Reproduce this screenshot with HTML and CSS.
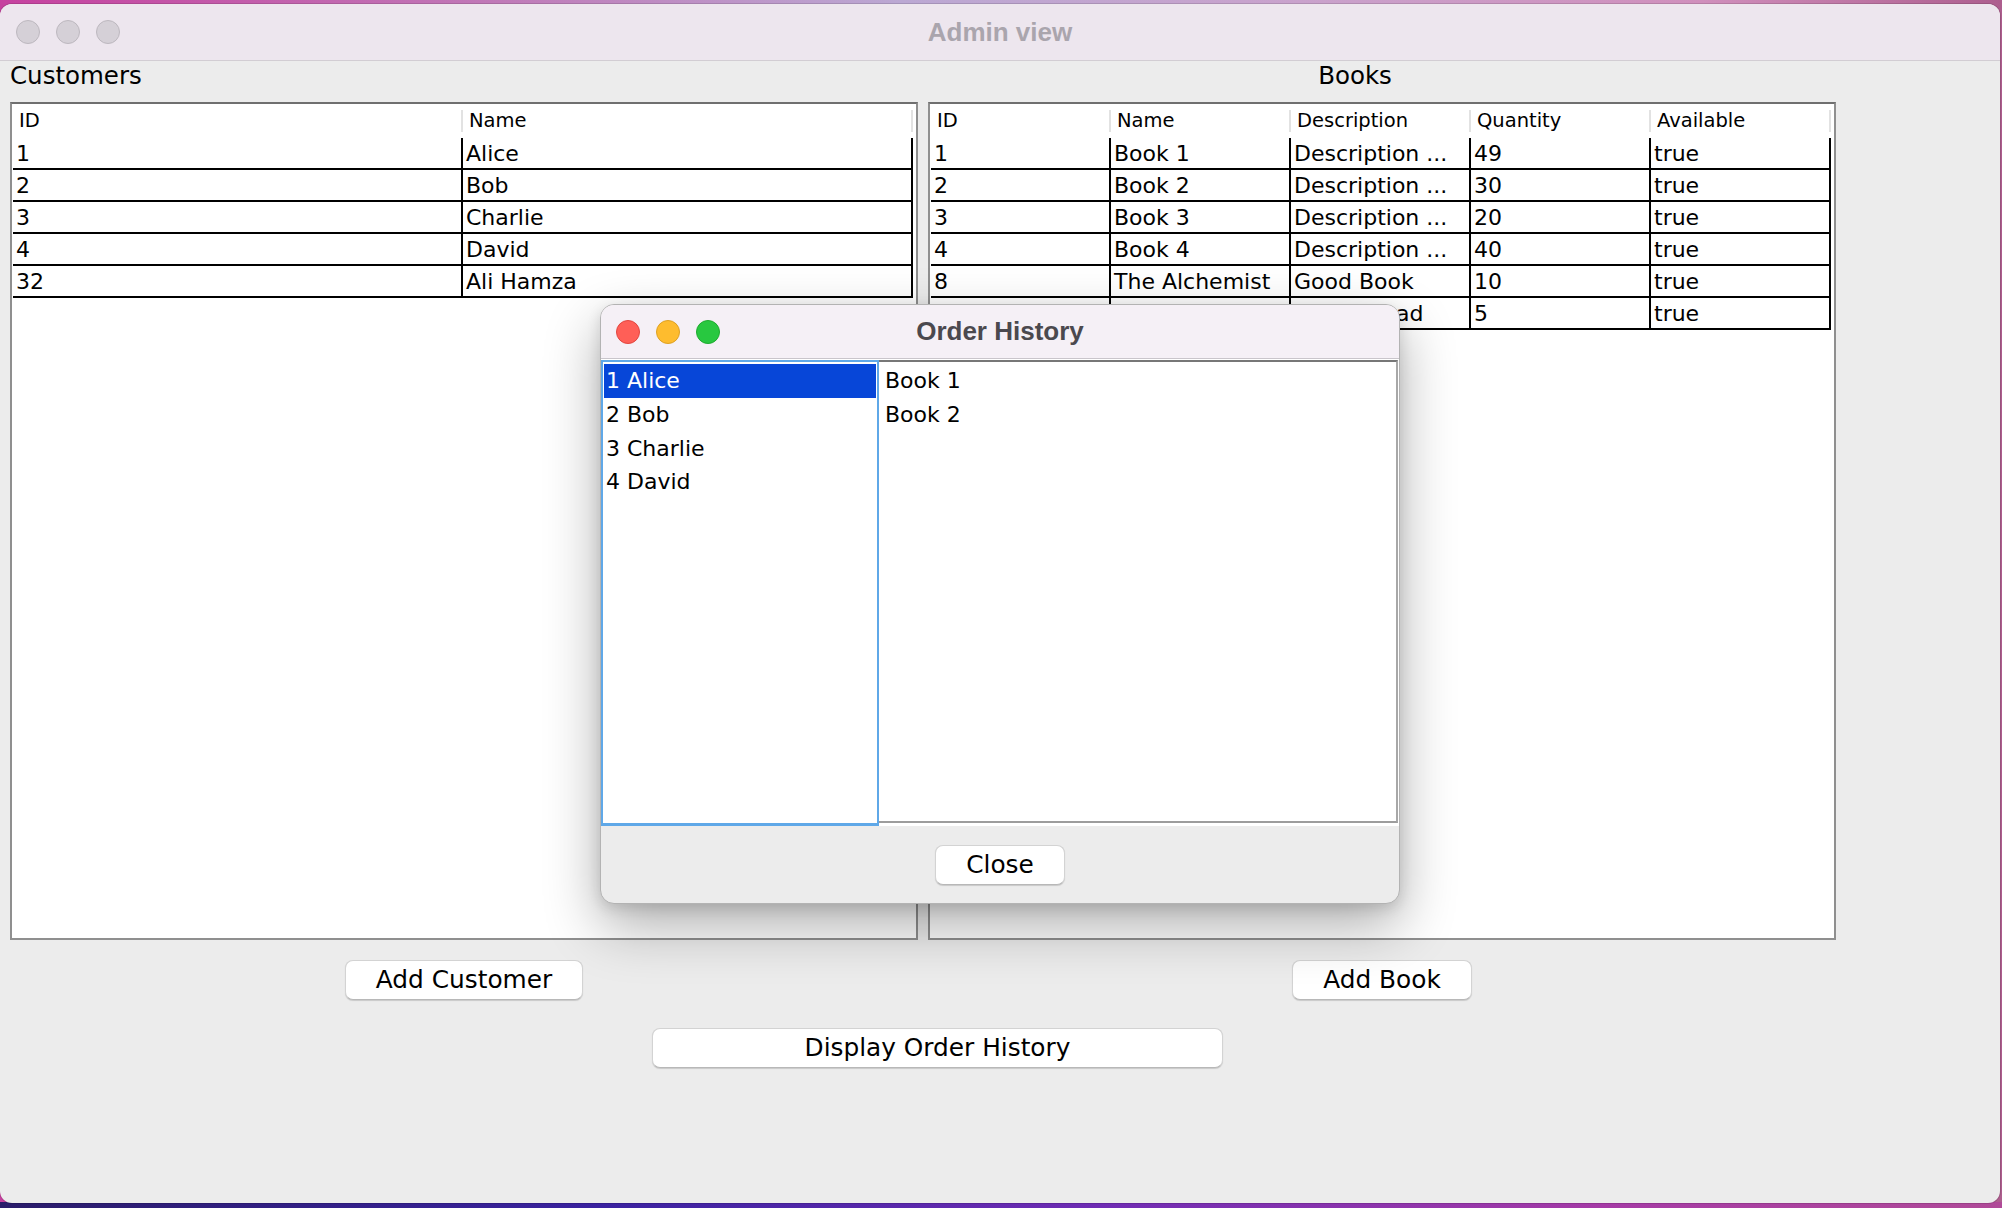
FILE: index.html
```html
<!DOCTYPE html>
<html lang="en">
<head>
<meta charset="utf-8">
<title>Admin view</title>
<link rel="stylesheet" href="styles.css">
</head>
<body>
<div class="window">
  <div class="titlebar">
    <div class="lights">
      <span class="light inactive"></span>
      <span class="light inactive"></span>
      <span class="light inactive"></span>
    </div>
    <div class="title">Admin view</div>
    <div></div>
  </div>

  <div class="content">
    <div class="panels">
      <section class="panel">
        <div class="label">Customers</div>
        <div class="tablebox">
          <div class="table cols-2">
            <div class="thead"><div class="th">ID</div><div class="th">Name</div></div>
            <div class="tr"><div class="td">1</div><div class="td">Alice</div></div>
            <div class="tr"><div class="td">2</div><div class="td">Bob</div></div>
            <div class="tr"><div class="td">3</div><div class="td">Charlie</div></div>
            <div class="tr"><div class="td">4</div><div class="td">David</div></div>
            <div class="tr"><div class="td">32</div><div class="td">Ali Hamza</div></div>
          </div>
        </div>
        <div class="btnrow"><button class="btn">Add Customer</button></div>
      </section>

      <section class="panel">
        <div class="label books">Books</div>
        <div class="tablebox">
          <div class="table cols-5">
            <div class="thead"><div class="th">ID</div><div class="th">Name</div><div class="th">Description</div><div class="th">Quantity</div><div class="th">Available</div></div>
            <div class="tr"><div class="td">1</div><div class="td">Book 1</div><div class="td">Description ...</div><div class="td">49</div><div class="td">true</div></div>
            <div class="tr"><div class="td">2</div><div class="td">Book 2</div><div class="td">Description ...</div><div class="td">30</div><div class="td">true</div></div>
            <div class="tr"><div class="td">3</div><div class="td">Book 3</div><div class="td">Description ...</div><div class="td">20</div><div class="td">true</div></div>
            <div class="tr"><div class="td">4</div><div class="td">Book 4</div><div class="td">Description ...</div><div class="td">40</div><div class="td">true</div></div>
            <div class="tr"><div class="td">8</div><div class="td">The Alchemist</div><div class="td">Good Book</div><div class="td">10</div><div class="td">true</div></div>
            <div class="tr"><div class="td"></div><div class="td"></div><div class="td">Not too bad</div><div class="td">5</div><div class="td">true</div></div>
          </div>
        </div>
        <div class="btnrow"><button class="btn">Add Book</button></div>
      </section>
    </div>
    <div class="bottomrow"><button class="btn wide">Display Order History</button></div>
  </div>

  <div class="dialog">
    <div class="titlebar dlg-titlebar">
      <div class="lights">
        <span class="light red"></span>
        <span class="light yellow"></span>
        <span class="light green"></span>
      </div>
      <div class="title dlg-title">Order History</div>
      <div></div>
    </div>
    <div class="dlg-body">
      <div class="list">
        <div class="item selected">1 Alice</div>
        <div class="item">2 Bob</div>
        <div class="item">3 Charlie</div>
        <div class="item">4 David</div>
      </div>
      <div class="detail">
        <div class="item">Book 1</div>
        <div class="item">Book 2</div>
      </div>
    </div>
    <div class="dlg-footer"><button class="btn">Close</button></div>
  </div>
</div>
</body>
</html>
```

FILE: styles.css
```css
html, body {
  margin: 0;
  padding: 0;
}

body {
  width: 2002px;
  height: 1208px;
  overflow: hidden;
  padding-top: 4px;
  box-sizing: border-box;
  font-family: "DejaVu Sans", "Noto Sans", sans-serif;
  background:
    linear-gradient(90deg, #2a1c6a 0%, #3a22a0 30%, #6f2cb4 55%, #a53aa6 80%, #b04a98 100%) left bottom / 100% 6px no-repeat,
    linear-gradient(90deg, #c6419f 0%, #c07ab8 25%, #bba8d3 45%, #c9a2cc 65%, #d08fbc 85%, #ad5e8e 100%);
}

.window {
  position: relative;
  width: 2000px;
  height: 1199px;
  background: #ececec;
  border-radius: 12px;
  overflow: hidden;
  box-shadow: 0 0 0 1px rgba(0, 0, 0, 0.12);
}

/* title bars */
.titlebar {
  height: 56px;
  display: grid;
  grid-template-columns: 1fr auto 1fr;
  align-items: center;
  background: #ede6ee;
  border-bottom: 1px solid #d2cdd3;
}

.lights {
  display: flex;
  gap: 16px;
  padding-left: 16px;
}

.light {
  width: 24px;
  height: 24px;
  border-radius: 50%;
  box-sizing: border-box;
  display: block;
}

.light.inactive { background: #d5d0d7; border: 1px solid #bdb8bf; }
.light.red { background: #ff5f57; border: 1px solid #e2463f; }
.light.yellow { background: #febc2e; border: 1px solid #dea123; }
.light.green { background: #28c840; border: 1px solid #1eab2f; }

.title {
  font-family: "Liberation Sans", Arial, sans-serif;
  font-weight: bold;
  font-size: 26px;
  color: #aaa5ad;
  text-align: center;
}

/* main content */
.panels {
  display: flex;
  gap: 10px;
  padding: 0 10px;
}

.panel {
  width: 908px;
}

.label {
  height: 41px;
  line-height: 30px;
  font-size: 24.5px;
  color: #000;
}

.label.books {
  text-align: center;
  padding-right: 54px;
}

.tablebox {
  height: 838px;
  box-sizing: border-box;
  border: 2px solid #8f8f8f;
  border-top-color: #6f6f6f;
  background: #fff;
  padding-left: 1px;
}

.table {
  width: 900px;
}

.thead,
.tr {
  display: grid;
}

.cols-2 .thead, .cols-2 .tr { grid-template-columns: repeat(2, 450px); }
.cols-5 .thead, .cols-5 .tr { grid-template-columns: repeat(5, 180px); }

.th {
  height: 34px;
  line-height: 34px;
  font-size: 19.5px;
  padding-left: 6px;
  color: #000;
  background: linear-gradient(#e2e2e2, #e2e2e2) no-repeat right 0 top 6px / 2px 22px;
}

.td {
  height: 32px;
  box-sizing: border-box;
  border-right: 2px solid #000;
  border-bottom: 2px solid #000;
  padding: 1px 0 0 3px;
  line-height: 29px;
  font-size: 22px;
  color: #000;
  white-space: nowrap;
  overflow: hidden;
}

/* buttons */
.btn {
  font-family: "DejaVu Sans", "Noto Sans", sans-serif;
  font-size: 24.8px;
  color: #000;
  height: 40px;
  padding: 0 30px;
  background: #fff;
  border: 1px solid #d3d3d3;
  border-bottom-color: #b8b8b8;
  border-radius: 8px;
  box-shadow: 0 1px 1px rgba(0, 0, 0, 0.15);
  line-height: 36px;
}

.btn.wide {
  width: 571px;
}

.btnrow {
  margin-top: 20px;
  display: flex;
  justify-content: center;
}

.bottomrow {
  margin-top: 28px;
  padding-left: 652px;
}

/* dialog */
.dialog {
  position: absolute;
  left: 600px;
  top: 300px;
  width: 800px;
  height: 600px;
  box-sizing: border-box;
  border: 1px solid #b3b3b3;
  border-radius: 14px;
  background: #ececec;
  overflow: hidden;
  box-shadow: 0 22px 55px rgba(0, 0, 0, 0.32), 0 4px 14px rgba(0, 0, 0, 0.12);
}

.dlg-titlebar {
  height: 53px;
  background: #f5f0f6;
  border-bottom: 1px solid #c9c5cb;
}

.dlg-titlebar .lights {
  padding-left: 15px;
}

.dlg-title {
  color: #4b494e;
}

.dlg-body {
  display: flex;
  height: 467px;
  box-sizing: border-box;
  padding-top: 1px;
  background: #fff;
}

.list {
  width: 278px;
  height: 466px;
  box-sizing: border-box;
  border: 2px solid #5fa8e8;
  border-bottom-width: 3px;
  padding: 2px 1px 0 1px;
}

.item {
  height: 33.5px;
  line-height: 33.5px;
  font-size: 22px;
  color: #000;
  padding-left: 2px;
  white-space: nowrap;
}

.item.selected {
  height: 34px;
  line-height: 34px;
  background: #0746d8;
  color: #fff;
}

.detail {
  flex: 1;
  height: 463px;
  box-sizing: border-box;
  margin-right: 1px;
  border-top: 2px solid #777;
  border-right: 2px solid #a8a8a8;
  border-bottom: 2px solid #9c9c9c;
  padding: 2px 5px 0 5px;
}

.detail .item {
  padding-left: 1px;
}

.dlg-footer {
  height: 77px;
  display: flex;
  align-items: center;
  justify-content: center;
}
```
